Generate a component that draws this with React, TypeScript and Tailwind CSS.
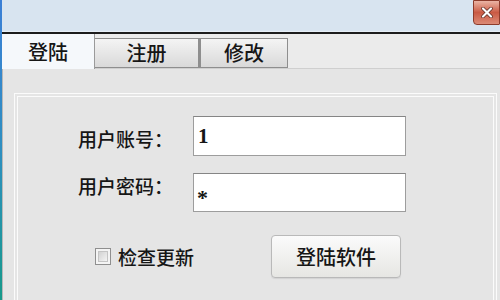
import React from "react"

function CloseButton() {
  return (
    <div className="w-[27px] h-[25px] rounded-bl-[4px] rounded-br-[1px] border border-[#8c3b2b] bg-gradient-to-b from-[#eab4a4] via-[#c95a44] to-[#dc8a76] flex items-center justify-center">
      <svg width="12" height="11" viewBox="0 0 12 11">
        <path d="M2 1.5 L10 9.5 M10 1.5 L2 9.5" stroke="#5a2a20" strokeWidth="3.6" strokeLinecap="round" />
        <path d="M2 1.5 L10 9.5 M10 1.5 L2 9.5" stroke="#ffffff" strokeWidth="2.2" strokeLinecap="round" />
      </svg>
    </div>
  )
}

export default function App() {
  return (
    <div className="w-[500px] h-[300px] overflow-hidden flex bg-[#e4e4e4] text-[#161616] font-['Noto_Sans_CJK_SC','Noto_Sans',sans-serif]">
      {/* window edge */}
      <div className="w-[2px] shrink-0 bg-gradient-to-b from-[#3b7fd6] via-[#2f8fc0] to-[#17998a]" />

      <div className="flex-1 flex flex-col min-h-0">
        {/* title bar */}
        <div className="h-[32px] shrink-0 bg-[#d8e4f0] flex justify-end items-start border-b border-[#e6eef6]">
          <CloseButton />
        </div>
        <div className="h-[2px] shrink-0 bg-[#1c1c1c]" />

        {/* tabs */}
        <div className="h-[35px] shrink-0 flex items-start bg-[#ebebeb] border-b border-[#cfcfcf]">
          <div className="w-[93px] h-[35px] bg-[#f5f8fb] border-r border-[#9a9a9a] flex items-center justify-center text-[20px] font-medium leading-none">
            登陆
          </div>
          <div className="mt-[4px] w-[104px] h-[30px] border border-l-0 border-[#8e8e8e] bg-gradient-to-b from-[#f4f4f4] to-[#d9d9d9] flex items-center justify-center text-[20px] font-medium leading-none">
            注册
          </div>
          <div className="mt-[4px] w-[89px] h-[30px] border border-l-2 border-[#8e8e8e] bg-gradient-to-b from-[#f4f4f4] to-[#d9d9d9] flex items-center justify-center text-[20px] font-medium leading-none">
            修改
          </div>
        </div>

        {/* content */}
        <div className="flex-1 min-h-0 border-l border-[#b8b8b8] bg-[#e5e5e5] pt-[24px] pl-[11px] pr-[3px]">
          <div className="h-[240px] border border-[#fbfbfb] p-[2px]">
            <div className="h-full border border-[#fbfbfb] pt-[19px] pl-[60px] flex flex-col">
              <div className="flex items-start">
                <div className="w-[115px] shrink-0 pt-[13px] text-[19px] font-medium leading-none">用户账号：</div>
                <div className="w-[213px] h-[40px] bg-white border border-[#9d9d9d] border-t-[#858585] flex items-center pl-[4px] text-[21px] font-bold font-['Liberation_Serif',serif] leading-none">
                  1
                </div>
              </div>
              <div className="flex items-start mt-[17px]">
                <div className="w-[115px] shrink-0 pt-[3px] text-[19px] font-medium leading-none">用户密码：</div>
                <div className="w-[213px] h-[39px] bg-white border border-[#9d9d9d] border-t-[#858585] flex items-center pl-[3px] text-[22px] font-bold font-['Liberation_Serif',serif] leading-none pt-[10px]">
                  *
                </div>
              </div>
              <div className="flex items-center mt-[23px]">
                <div className="ml-[17px] flex items-center gap-[7px]">
                  <div className="w-[16px] h-[17px] shrink-0 border border-[#8f8f8f] p-[2px] bg-[#f4f4f4]">
                    <div className="w-full h-full border border-[#c4c4c4] bg-gradient-to-br from-[#d2d2d2] to-[#f4f4f4]" />
                  </div>
                  <span className="text-[19px] font-medium leading-none">检查更新</span>
                </div>
                <div className="ml-[77px] w-[130px] h-[43px] rounded-[4px] border border-[#b9b9b9] bg-gradient-to-b from-[#fbfbfb] to-[#e6e6e3] shadow-[0_1px_1px_rgba(0,0,0,0.08)] flex items-center justify-center text-[20px] font-medium leading-none">
                  登陆软件
                </div>
              </div>
            </div>
          </div>
        </div>
      </div>
    </div>
  )
}
